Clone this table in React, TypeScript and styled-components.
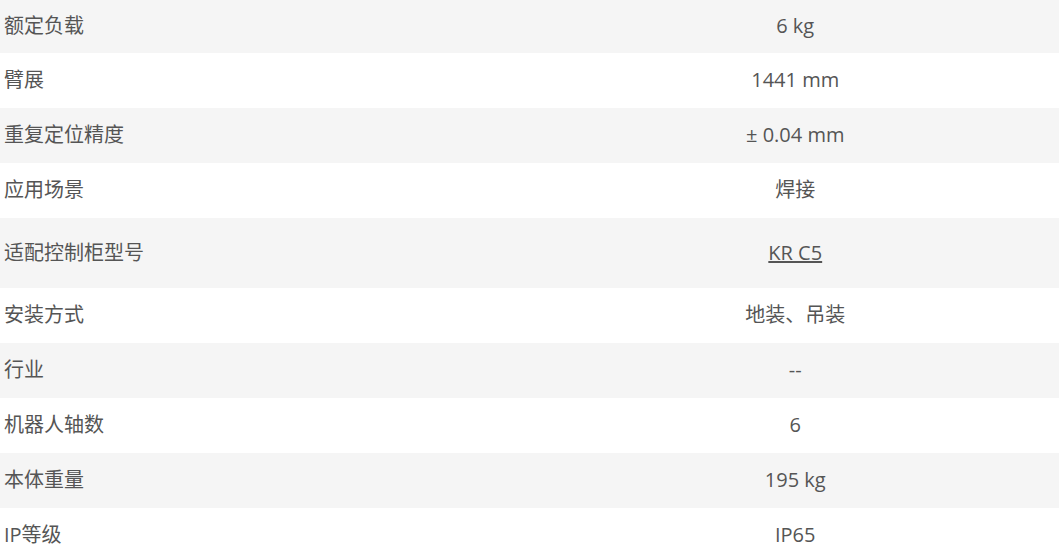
import React from "react";
import styled, { createGlobalStyle } from "styled-components";

const GlobalStyle = createGlobalStyle`
  html, body {
    margin: 0;
    padding: 0;
    background: #ffffff;
  }
  body {
    font-family: "Open Sans", "Noto Sans CJK SC", sans-serif;
    overflow: hidden;
  }
`;

const specs: { label: string; value: string; link?: boolean; tall?: boolean }[] = [
  { label: "额定负载", value: "6 kg" },
  { label: "臂展", value: "1441 mm" },
  { label: "重复定位精度", value: "± 0.04 mm" },
  { label: "应用场景", value: "焊接" },
  { label: "适配控制柜型号", value: "KR C5", link: true, tall: true },
  { label: "安装方式", value: "地装、吊装" },
  { label: "行业", value: "--" },
  { label: "机器人轴数", value: "6" },
  { label: "本体重量", value: "195 kg" },
  { label: "IP等级", value: "IP65" },
];

function App() {
  return (
    <>
      <GlobalStyle />
      <SpecTable>
        <tbody>
          {specs.map((s, i) => (
            <Row key={s.label} $striped={i % 2 === 0} $tall={!!s.tall} $first={i === 0}>
              <Label>{s.label}</Label>
              <Value>{s.link ? <ModelLink href="#">{s.value}</ModelLink> : s.value}</Value>
            </Row>
          ))}
        </tbody>
      </SpecTable>
    </>
  );
}

export default App;

const SpecTable = styled.table`
  width: 1059px;
  border-collapse: collapse;
  table-layout: fixed;
  color: #555555;
  font-size: 20px;
  line-height: 1.2;
`;

const Row = styled.tr<{ $striped: boolean; $tall: boolean; $first: boolean }>`
  height: ${(p) => (p.$tall ? 70 : p.$first ? 53 : 55)}px;
  background: ${(p) => (p.$striped ? "#f5f5f5" : "#ffffff")};
`;

const Label = styled.td`
  width: 50%;
  padding: 0 0 1px 4px;
  text-align: left;
  vertical-align: middle;
`;

const Value = styled.td`
  width: 50%;
  padding: 0 0 1px 0;
  text-align: center;
  vertical-align: middle;
`;

const ModelLink = styled.a`
  color: #555555;
  text-decoration: underline;
`;
